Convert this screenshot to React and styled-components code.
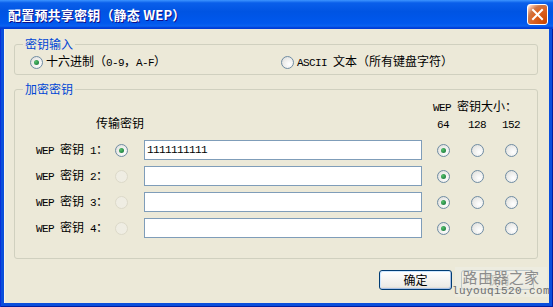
import React from 'react';
import styled, { createGlobalStyle } from 'styled-components';

const GlobalStyle = createGlobalStyle`
  body {
    margin: 0;
    font-family: "Noto Sans CJK SC", "Noto Sans", sans-serif;
    font-size: 12px;
    color: #000;
  }
`;

const KEY_COLS = '72px 36px 282px 34px 34px 34px';
const SIZES = ['64', '128', '152'];

export default function App() {
  const keys = [1, 2, 3, 4];
  return (
    <>
      <GlobalStyle />
      <Window>
        <TitleBar>
          <Title>配置预共享密钥（静态 WEP）</Title>
          <CloseButton aria-label='close'>
            <svg width='13' height='13' viewBox='0 0 13 13'>
              <path d='M2 2 L11 11 M11 2 L2 11' stroke='#fff' strokeWidth='2' strokeLinecap='square' />
            </svg>
          </CloseButton>
        </TitleBar>
        <Client>
          <Group $bottom={6}>
            <Legend>密钥输入</Legend>
            <Options>
              <Option>
                <Radio $checked />
                <span>十六进制（<Lat>0-9</Lat>，<Lat>A-F</Lat>）</span>
              </Option>
              <Option>
                <Radio />
                <span><Lat>ASCII </Lat>文本（所有键盘字符）</span>
              </Option>
            </Options>
          </Group>

          <Group $bottom={20} $gap>
            <Legend>加密密钥</Legend>
            <KeyHeader>
              <SizeTitle><Lat>WEP </Lat>密钥大小：</SizeTitle>
              <TransferTitle>传输密钥</TransferTitle>
              {SIZES.map((s, i) => (
                <SizeLabel key={s} $col={4 + i}><Lat>{s}</Lat></SizeLabel>
              ))}
            </KeyHeader>
            <KeyRows>
              {keys.map((n) => (
                <React.Fragment key={n}>
                  <KeyLabel><Lat>WEP </Lat>密钥<Lat> {n}</Lat>：</KeyLabel>
                  <RadioCell>
                    <Radio $checked={n === 1} $disabled={n !== 1} />
                  </RadioCell>
                  <KeyInput defaultValue={n === 1 ? '1111111111' : ''} />
                  <RadioCell $center><Radio $checked /></RadioCell>
                  <RadioCell $center><Radio /></RadioCell>
                  <RadioCell $center><Radio /></RadioCell>
                </React.Fragment>
              ))}
            </KeyRows>
          </Group>

          <ButtonRow>
            <Button $default>确定</Button>
            <Button>取消</Button>
          </ButtonRow>
        </Client>
        <Watermark>
          <span>路由器之家</span>
          <WatermarkUrl>luyouqi520.com</WatermarkUrl>
        </Watermark>
      </Window>
    </>
  );
}

const Window = styled.div`
  position: relative;
  width: 553px;
  height: 307px;
  box-sizing: border-box;
  display: flex;
  flex-direction: column;
  background: #0a4fdc;
  box-shadow: inset 1px 0 #0831d9, inset -1px 0 #001ea0, inset 0 -1px #001ea0;
  overflow: hidden;
`;

const TitleBar = styled.div`
  height: 29px;
  flex: none;
  display: flex;
  align-items: center;
  justify-content: space-between;
  padding: 0 5px 0 8px;
  background: linear-gradient(
    180deg,
    #3d95ff 0%,
    #0a5fea 10%,
    #0054e3 40%,
    #0058ee 80%,
    #0a62f0 90%,
    #003dd7 96%,
    #003dd7 100%
  );
`;

const Title = styled.span`
  color: #fff;
  font-weight: bold;
  font-size: 13px;
  letter-spacing: 0.2px;
  text-shadow: 1px 1px #0f1089;
`;

const CloseButton = styled.div`
  width: 21px;
  height: 21px;
  box-sizing: border-box;
  border: 1px solid #fff;
  border-radius: 3px;
  display: flex;
  align-items: center;
  justify-content: center;
  background: radial-gradient(circle at 90% 90%, #cc4600 0%, #dc6527 55%, #cd7546 70%, #ffccb2 90%, #fff 100%);
`;

const Client = styled.div`
  flex: 1;
  margin: 0 4px 4px;
  display: flex;
  flex-direction: column;
  padding: 8px 11px 0 10px;
  background: #ece9d8;
  box-shadow: inset 1px 0 #f6f4ec;
`;

const Group = styled.fieldset`
  margin: ${(p) => (p.$gap ? '7px' : '0')} 0 0;
  padding: 3px 8px ${(p) => p.$bottom}px 8px;
  min-width: 0;
  border: 1px solid #d0d0bf;
  border-radius: 3px;
`;

const Legend = styled.legend`
  padding: 0 2px;
  line-height: 14px;
  color: #0046d5;
`;

const Lat = styled.span`
  font-family: "Liberation Mono", monospace;
  font-size: 11px;
  letter-spacing: -0.6px;
  white-space: pre;
`;

const Options = styled.div`
  margin-left: 7px;
  display: grid;
  grid-template-columns: 251px auto;
  height: 14px;
  align-items: center;
`;

const Option = styled.label`
  display: flex;
  align-items: center;
  gap: 3px;
  line-height: 14px;
  white-space: nowrap;
`;

const Radio = styled.span`
  flex: none;
  width: 13px;
  height: 13px;
  box-sizing: border-box;
  border-radius: 50%;
  display: inline-flex;
  align-items: center;
  justify-content: center;
  border: 1px solid ${(p) => (p.$disabled ? '#dcd9c9' : '#6f8ca3')};
  background: ${(p) =>
    p.$disabled
      ? '#efede3'
      : 'radial-gradient(circle at 65% 65%, #ffffff 0%, #ececea 55%, #d6d6d0 100%)'};

  &::after {
    content: '';
    display: ${(p) => (p.$checked && !p.$disabled ? 'block' : 'none')};
    width: 5px;
    height: 5px;
    border-radius: 50%;
    background: radial-gradient(circle at 35% 35%, #55c26a 0%, #2a8d4a 60%, #1f6e3a 100%);
  }
`;

const KeyHeader = styled.div`
  margin-left: 13px;
  display: grid;
  grid-template-columns: ${KEY_COLS};
  grid-template-rows: 14px 14px;
  row-gap: 3px;
  line-height: 14px;
  margin-bottom: 10px;
`;

const SizeTitle = styled.div`
  grid-column: 4 / span 3;
  grid-row: 1;
  padding-left: 7px;
  white-space: nowrap;
`;

const TransferTitle = styled.div`
  grid-column: 1 / span 2;
  grid-row: 2;
  text-align: right;
`;

const SizeLabel = styled.div`
  grid-column: ${(p) => p.$col};
  grid-row: 2;
  text-align: center;
`;

const KeyRows = styled.div`
  margin-left: 13px;
  display: grid;
  grid-template-columns: ${KEY_COLS};
  grid-auto-rows: 20px;
  row-gap: 6px;
  align-items: center;
`;

const KeyLabel = styled.div`
  line-height: 14px;
  white-space: nowrap;
`;

const RadioCell = styled.div`
  display: flex;
  justify-content: ${(p) => (p.$center ? 'center' : 'flex-start')};
  padding-left: ${(p) => (p.$center ? '0' : '7px')};
`;

const KeyInput = styled.input`
  width: 278px;
  height: 20px;
  box-sizing: border-box;
  margin: 0;
  border: 1px solid #7f9db9;
  padding: 0 2px;
  background: #fff;
  font-family: "Liberation Mono", monospace;
  font-size: 11px;
  letter-spacing: -0.6px;
  color: #000;
  outline: none;
`;

const ButtonRow = styled.div`
  margin-top: 11px;
  display: flex;
  justify-content: flex-end;
  gap: 9px;
  padding-right: 4px;
`;

const Button = styled.button`
  width: 73px;
  height: 20px;
  box-sizing: border-box;
  margin: 0;
  padding: 0;
  border: 1px solid #003c74;
  border-radius: 3px;
  font-family: "Noto Sans CJK SC", sans-serif;
  font-size: 12px;
  line-height: 16px;
  color: #000;
  background: linear-gradient(180deg, #fff 0%, #ecebe6 86%, #d6d0c5 100%);
  box-shadow: ${(p) =>
    p.$default ? 'inset -1px -1px #a8c1e8, inset 1px 1px #cee7ff' : 'none'};
`;

const Watermark = styled.div`
  position: absolute;
  left: 455px;
  top: 267px;
  width: 92px;
  display: flex;
  flex-direction: column;
  align-items: center;
  background: rgba(238, 236, 226, 0.8);
  color: #8c8c8c;
  font-size: 15px;
  line-height: 19px;
  letter-spacing: 0.4px;
`;

const WatermarkUrl = styled.span`
  font-family: "Liberation Mono", monospace;
  font-size: 11px;
  line-height: 11px;
  color: #6e6e6e;
`;
